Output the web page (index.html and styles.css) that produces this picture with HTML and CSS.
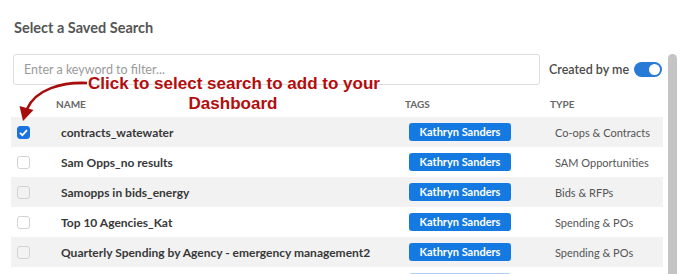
FILE: index.html
```html
<!DOCTYPE html>
<html lang="en">
<head>
  <meta charset="UTF-8" />
  <title>Select a Saved Search</title>
  <link rel="stylesheet" href="styles.css">
</head>
<body>
  <div class="dialog">
    <h2 class="title">Select a Saved Search</h2>

    <div class="body">
      <div class="content">
        <div class="filter">
          <input class="search" type="text" placeholder="Enter a keyword to filter...">
          <span class="mine">Created by me</span>
          <span class="toggle"><span class="knob"></span></span>
        </div>

        <div class="grid head">
          <div></div>
          <div>Name</div>
          <div>Tags</div>
          <div>Type</div>
        </div>

        <div class="grid row">
          <div class="cb"><span class="box checked"><svg width="13" height="13" viewBox="0 0 13 13"><path d="M3 6.8l2.4 2.4L10 4.2" fill="none" stroke="#fff" stroke-width="1.8"/></svg></span></div>
          <div class="name">contracts_watewater</div>
          <div class="tagcell"><span class="tag">Kathryn Sanders</span></div>
          <div class="type">Co-ops &amp; Contracts</div>
        </div>
        <div class="grid row">
          <div class="cb"><span class="box"></span></div>
          <div class="name">Sam Opps_no results</div>
          <div class="tagcell"><span class="tag">Kathryn Sanders</span></div>
          <div class="type">SAM Opportunities</div>
        </div>
        <div class="grid row">
          <div class="cb"><span class="box"></span></div>
          <div class="name">Samopps in bids_energy</div>
          <div class="tagcell"><span class="tag">Kathryn Sanders</span></div>
          <div class="type">Bids &amp; RFPs</div>
        </div>
        <div class="grid row">
          <div class="cb"><span class="box"></span></div>
          <div class="name">Top 10 Agencies_Kat</div>
          <div class="tagcell"><span class="tag">Kathryn Sanders</span></div>
          <div class="type">Spending &amp; POs</div>
        </div>
        <div class="grid row">
          <div class="cb"><span class="box"></span></div>
          <div class="name">Quarterly Spending by Agency - emergency management2</div>
          <div class="tagcell"><span class="tag">Kathryn Sanders</span></div>
          <div class="type">Spending &amp; POs</div>
        </div>
        <div class="grid row faded">
          <div></div>
          <div></div>
          <div class="tagcell"><span class="tag"></span></div>
          <div></div>
        </div>
      </div>
      <div class="scrollbar"><div class="thumb"></div></div>
    </div>

    <!-- annotation over the table -->
    <svg class="arrow" width="120" height="130" viewBox="0 0 120 130">
      <path d="M87 83 C 62 82, 36 89, 27 109" fill="none" stroke="#a80d0d" stroke-width="2.6"/>
      <polygon points="19.5,106 33.5,110 23,121" fill="#a80d0d"/>
    </svg>
    <div class="note">Click to select search to add to your<br>Dashboard</div>
  </div>
</body>
</html>
```

FILE: styles.css
```css
body {
  margin: 0;
  padding: 0;
  background: #fff;
  font-family: Lato, "Open Sans", sans-serif;
  color: #333;
  overflow: hidden;
}

.dialog {
  position: relative;
  width: 688px;
  height: 274px;
  overflow: hidden;
}

.title {
  margin: 0;
  padding: 19px 14px 0;
  font-size: 14.5px;
  line-height: 18px;
  font-weight: 700;
  color: #555;
}

.body {
  display: flex;
  gap: 5px;
  margin-top: 17px;
  padding-left: 11px;
}

.content {
  width: 652px;
}

.filter {
  display: flex;
  align-items: center;
  padding-left: 2px;
  height: 31px;
}

.search {
  flex-shrink: 0;
  box-sizing: border-box;
  width: 527px;
  height: 31px;
  border: 1px solid #ddd;
  border-radius: 3px;
  padding: 0 10px;
  font-family: Lato, sans-serif;
  font-size: 12.5px;
  color: #333;
  outline: none;
}

.search::placeholder {
  color: #9a9a9a;
}

.mine {
  margin-left: 9px;
  white-space: nowrap;
  font-size: 12.5px;
  font-weight: 600;
  color: #4a4a4a;
}

.toggle {
  flex-shrink: 0;
  margin-left: 5px;
  width: 28px;
  height: 15px;
  border-radius: 8px;
  background: #2979d6;
  display: flex;
  align-items: center;
  justify-content: flex-end;
  padding-right: 2px;
  box-sizing: border-box;
}

.knob {
  width: 11px;
  height: 11px;
  border-radius: 50%;
  background: #fff;
}

.grid {
  display: grid;
  grid-template-columns: 45px 349px 145px 1fr;
  align-items: center;
}

.head {
  height: 32px;
  padding-top: 5px;
  box-sizing: border-box;
  font-size: 10px;
  font-weight: 700;
  text-transform: uppercase;
  color: #666;
}

.row {
  height: 30px;
  font-size: 11px;
}

.row:nth-of-type(odd) {
  background: #f2f2f2;
}

.head + .row {
  background: #f2f2f2;
}

.cb {
  padding-left: 6px;
  display: flex;
}

.box {
  box-sizing: border-box;
  width: 13px;
  height: 13px;
  border: 1px solid #d2d2d2;
  border-radius: 3px;
  display: flex;
}

.box.checked {
  background: #1a73e0;
  border-color: #1a73e0;
}

.box svg {
  margin: -1px;
}

.name {
  padding-left: 5px;
  font-size: 12px;
  font-weight: 700;
  color: #383838;
}

.tagcell {
  padding-left: 4px;
  display: flex;
}

.tag {
  width: 102px;
  height: 18px;
  line-height: 18px;
  border-radius: 3px;
  background: #1479e0;
  color: #fff;
  font-size: 11px;
  font-weight: 700;
  text-align: center;
}

.type {
  padding-left: 5px;
  color: #555;
}

.faded {
  opacity: 0.35;
}

.scrollbar {
  width: 9px;
}

.thumb {
  height: 240px;
  background: #c4c4c4;
  border-radius: 5px 5px 0 0;
}

.arrow {
  position: absolute;
  left: 0;
  top: 0;
}

.note {
  position: absolute;
  left: 88px;
  top: 74px;
  width: 290px;
  text-align: center;
  white-space: nowrap;
  font-family: "Liberation Sans", Arial, sans-serif;
  font-weight: 700;
  font-size: 17px;
  line-height: 20px;
  color: #b30d0d;
}
```
